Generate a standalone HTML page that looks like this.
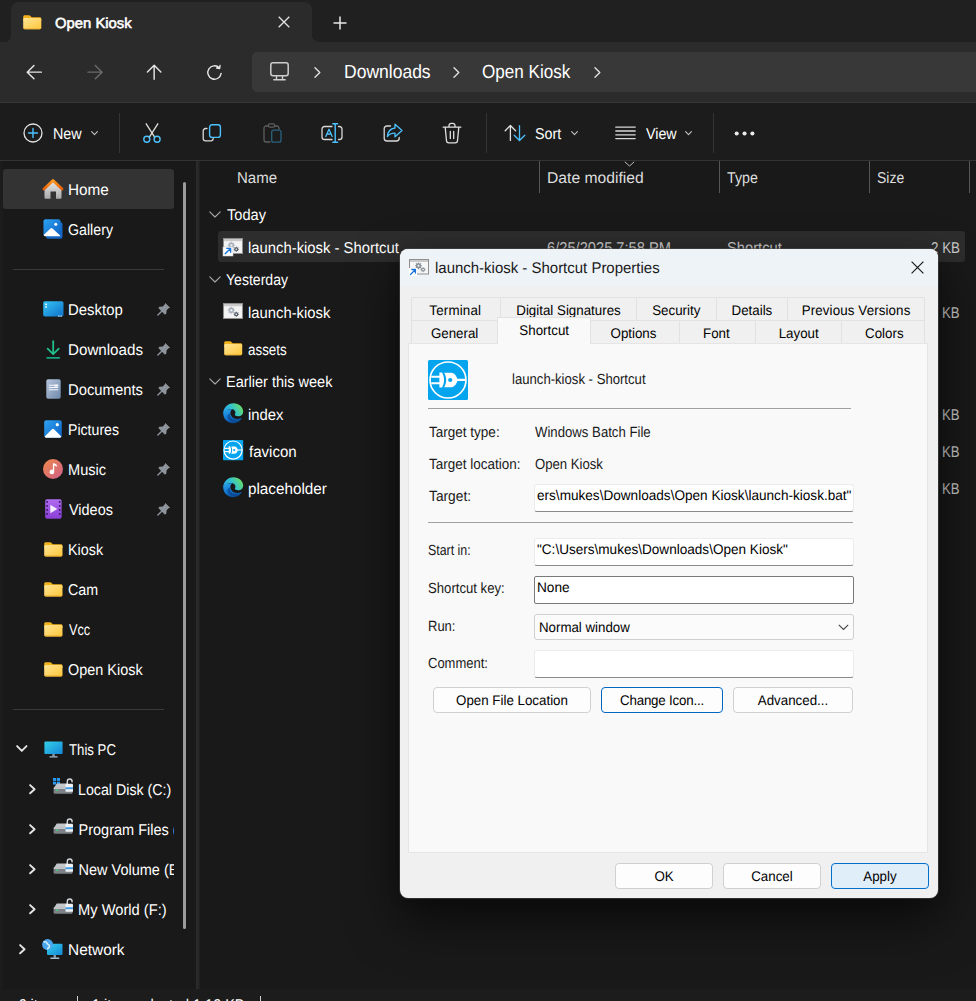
<!DOCTYPE html>
<html lang="en">
<head>
<meta charset="utf-8">
<title>Open Kiosk - File Explorer</title>
<style>
*{box-sizing:border-box;margin:0;padding:0}
html,body{width:976px;height:1001px;overflow:hidden;background:#191919}
body{position:relative;font-family:"Liberation Sans",sans-serif;color:#fff;-webkit-font-smoothing:antialiased}
.abs{position:absolute}
.t{text-rendering:geometricPrecision;position:absolute;white-space:nowrap;height:20px;line-height:20px;margin-top:-10px;font-size:14.5px;color:#fff}
svg{position:absolute;overflow:visible}
/* explorer chrome */
#titlebar{left:0;top:0;width:976px;height:42px;background:#202020}
#tab{left:11px;top:2px;width:300.700px;height:40px;background:#2b2b2b;border-radius:8px 8px 0 0}
#navbar{left:0;top:42px;width:976px;height:60px;background:#2b2b2b}
#navline{left:0;top:102px;width:976px;height:1px;background:#383838}
#addr{left:252px;top:52px;width:740px;height:40px;background:#383838;border-radius:5px}
#cmdbar{left:0;top:103px;width:976px;height:57px;background:#1c1c1c}
#cmdline{left:0;top:160px;width:976px;height:1px;background:#333}
#leftedge{left:0;top:161px;width:3px;height:828px;background:#1c1c1c}
#panesep{left:196.300px;top:161px;width:3.500px;height:828px;background:linear-gradient(to right,#2b2b2b 0,#2a2a2a 40%,#1d1d1d 100%)}
#status{left:0;top:989px;width:976px;height:12px;background:#1c1c1c}
.vsep{position:absolute;width:1px;background:#343434}
.hsep{position:absolute;height:1px;background:#3a3a3a}
/* sidebar */
.sel{position:absolute;background:#333;border-radius:3px}
.pin{left:158px}
.sy{transform:scaleY(1.08)}
.sy2{transform:scaleY(1.07);color:#1a1a1a !important}
.hd{color:#dedede}.dim{color:#cacaca}
/* dialog */
#dlg{left:400px;top:249px;width:538px;height:649px;background:#f0f0f0;border-radius:8px;overflow:hidden;box-shadow:0 0 0 1px rgba(80,80,80,.5),0 22px 50px rgba(0,0,0,.6),0 2px 14px rgba(0,0,0,.14);color:#000}
#dlg .t{color:#000;font-size:13.33px}
#dlg .lb{font-size:13.7px}
.inp .t{text-rendering:geometricPrecision}
.btn .ax{top:.300px}
.ax{display:inline-block;position:relative;top:1.200px;transform:scaleY(1.05);text-rendering:geometricPrecision}
#dlgtitle{left:0;top:0;width:538px;height:36.400px;background:#eef3f8}
.tab{position:absolute;height:23px;border:1px solid #e2e2e2;border-bottom:none;background:#f0f0f0;font-size:13.33px;text-align:center;line-height:23px;color:#000;white-space:nowrap}
#panel{left:8px;top:94px;width:520px;height:510px;background:#f9f9f9;border:1px solid #e5e5e5}
.inp{position:absolute;background:#fff;border:1px solid #ececec;border-bottom:1px solid #8a8a8a;border-radius:3px;font-size:13.33px;color:#000;white-space:nowrap;overflow:hidden}
.btn{position:absolute;background:#fdfdfd;border:1px solid #d0d0d0;border-radius:4px;font-size:13.33px;color:#000;text-align:center;white-space:nowrap}
</style>
</head>
<body>
<!-- ===== chrome ===== -->
<div class="abs" id="titlebar"></div>
<div class="abs" id="tab"></div>
<div class="abs" id="navbar"></div>
<div class="abs" id="navline"></div>
<div class="abs" id="addr"></div>
<div class="abs" id="cmdbar"></div>
<div class="abs" id="cmdline"></div>
<div class="abs" id="leftedge"></div>
<div class="abs" id="panesep"></div>
<!--CHROME-START-->
<!-- tab corner pieces -->
<div class="abs" style="left:5px;top:36px;width:6px;height:6px;background:radial-gradient(circle at 0 0,#202020 5.6px,#2b2b2b 6.4px)"></div>
<div class="abs" style="left:311.700px;top:35px;width:7px;height:7px;background:radial-gradient(circle at 100% 0,#202020 6.6px,#2b2b2b 7.4px)"></div>
<!-- tab folder icon -->
<svg style="left:23px;top:15px" width="18.5" height="14.6" viewBox="0 0 19 15"><defs><linearGradient id="fo6" x1="0" y1="0" x2="1" y2="1"><stop offset="0" stop-color="#ffe594"/><stop offset="1" stop-color="#ffc63a"/></linearGradient></defs><path d="M.2 1.800C.2 1 .9.300 1.700.300h4.600c.5 0 1 .2 1.300.6L9 2.300h8.200c.9 0 1.600.7 1.600 1.500V6H.2z" fill="#f2b21c"/><path d="M.2 4.600c0-.8.700-1.500 1.500-1.500h15.600c.8 0 1.500.7 1.500 1.500v8.600c0 .8-.7 1.500-1.500 1.500H1.700c-.8 0-1.500-.7-1.500-1.500z" fill="url(#fo6)"/><path d="M.2 12.900v.3c0 .8.700 1.500 1.500 1.500h15.600c.8 0 1.500-.7 1.500-1.500v-.3c0 .5-.7.900-1.500.900H1.700c-.8 0-1.500-.4-1.500-.9z" fill="#e8a92c"/></svg>
<span class="t sy" id="tabtitle" style="left:54.82px;top:23.7px;-webkit-text-stroke:.55px #fff;font-size:14.5px;transform:scale(1.0232,1.0);transform-origin:0 50%">Open Kiosk</span>
<svg style="left:278px;top:16px" width="12" height="12" viewBox="0 0 12 12"><path d="M.7.7l10.600 10.600M11.300.7L.7 11.300" stroke="#e4e4e4" stroke-width="1.300" fill="none"/></svg>
<svg style="left:333px;top:16px" width="14" height="14" viewBox="0 0 14 14"><path d="M7 .5v13M.5 7h13" stroke="#e8e8e8" stroke-width="1.500" fill="none"/></svg>
<!-- nav arrows -->
<svg style="left:26.100px;top:63.800px" width="16.300" height="16.300" viewBox="0 0 17 17"><path d="M16 8.500H1.500M8.300 1.500L1.300 8.500l7 7" stroke="#e6e6e6" stroke-width="1.500" fill="none" stroke-linecap="round" stroke-linejoin="round"/></svg>
<svg style="left:86.700px;top:63.800px" width="16.300" height="16.300" viewBox="0 0 17 17"><path d="M1 8.500h14.500M8.700 1.500l7 7-7 7" stroke="#6b6b6b" stroke-width="1.500" fill="none" stroke-linecap="round" stroke-linejoin="round"/></svg>
<svg style="left:145.900px;top:64.100px" width="16.300" height="16.300" viewBox="0 0 17 17"><path d="M8.500 16V1.500M1.500 8.300l7-7 7 7" stroke="#e6e6e6" stroke-width="1.500" fill="none" stroke-linecap="round" stroke-linejoin="round"/></svg>
<svg style="left:206px;top:64px" width="17" height="17" viewBox="0 0 17 17"><path d="M15.200 8.500a6.700 6.700 0 1 1-2.600-5.300M13 .8v3h-3" stroke="#e6e6e6" stroke-width="1.400" fill="none" stroke-linecap="round" stroke-linejoin="round" transform="rotate(8 8.500 8.500)"/></svg>
<!-- address bar -->
<svg style="left:270px;top:62px" width="19" height="19" viewBox="0 0 19 19"><rect x=".8" y=".8" width="17.400" height="13" rx="2.200" stroke="#cfcfcf" stroke-width="1.500" fill="none"/><path d="M6.500 14v3.600M12.500 14v3.600M3.800 17.700h11.400" stroke="#cfcfcf" stroke-width="1.400" fill="none" stroke-linecap="round"/></svg>
<svg class="chev" style="left:314px;top:67px" width="7" height="11" viewBox="0 0 7 11"><path d="M1 .8l4.800 4.700L1 10.200" stroke="#e0e0e0" stroke-width="1.400" fill="none" stroke-linecap="round" stroke-linejoin="round"/></svg>
<span class="t" id="adl" style="left:343.57px;top:70.95px;font-size:17.3px;transform:scale(1.0132,1.1);transform-origin:0 50%">Downloads</span>
<svg class="chev" style="left:453px;top:67px" width="7" height="11" viewBox="0 0 7 11"><path d="M1 .8l4.800 4.700L1 10.200" stroke="#e0e0e0" stroke-width="1.400" fill="none" stroke-linecap="round" stroke-linejoin="round"/></svg>
<span class="t" id="aok" style="left:481.72px;top:70.95px;font-size:17.3px;transform:scale(0.9884,1.1);transform-origin:0 50%">Open Kiosk</span>
<svg class="chev" style="left:594px;top:67px" width="7" height="11" viewBox="0 0 7 11"><path d="M1 .8l4.800 4.700L1 10.200" stroke="#e0e0e0" stroke-width="1.400" fill="none" stroke-linecap="round" stroke-linejoin="round"/></svg>
<!-- command bar -->
<svg style="left:22.500px;top:122.500px" width="20" height="20" viewBox="0 0 20 20"><circle cx="10" cy="10" r="9" stroke="#e4e4e4" stroke-width="1.300" fill="none"/><path d="M10 5.500v9M5.500 10h9" stroke="#4cc2ff" stroke-width="1.400" stroke-linecap="round"/></svg>
<span class="t sy" id="cnew" style="left:53.35px;top:134.55px;font-size:14.5px;transform:scale(0.9901,1.08);transform-origin:0 50%">New</span>
<svg style="left:90.5px;top:131px" width="7" height="4.500" viewBox="0 0 7 4.500"><path d="M.6.600l2.900 3 2.900-3" stroke="#c4c4c4" stroke-width="1.100" fill="none" stroke-linecap="round" stroke-linejoin="round"/></svg>
<div class="vsep" style="left:119px;top:113px;height:40px"></div>
<!-- cut -->
<svg style="left:142px;top:123px" width="20" height="20" viewBox="0 0 20 20"><path d="M4.200.800l8.600 13.600M15.800.800L7.200 14.400" stroke="#e0e0e0" stroke-width="1.300" fill="none" stroke-linecap="round"/><circle cx="4.800" cy="16.300" r="3" stroke="#4cc2ff" stroke-width="1.400" fill="none"/><circle cx="15.100" cy="16.300" r="3" stroke="#4cc2ff" stroke-width="1.400" fill="none"/></svg>
<!-- copy -->
<svg style="left:202px;top:124px" width="20" height="18" viewBox="0 0 20 18"><path d="M5 4.500H3.600A2.400 2.400 0 0 0 1.200 6.900v7.500a2.400 2.400 0 0 0 2.400 2.400h5.200a2.400 2.400 0 0 0 2.400-2.400" stroke="#d8d8d8" stroke-width="1.300" fill="none" stroke-linecap="round"/><rect x="7.600" y=".800" width="10.800" height="12.600" rx="2.400" stroke="#4cc2ff" stroke-width="1.400" fill="none"/></svg>
<!-- paste (disabled) -->
<svg style="left:263px;top:123px" width="19" height="20" viewBox="0 0 19 20"><path d="M5 3H3.200A2.200 2.200 0 0 0 1 5.200v11.600A2.200 2.200 0 0 0 3.200 19H7M12 3h1.800A2.200 2.200 0 0 1 16 5.200V6" stroke="#5e5e5e" stroke-width="1.300" fill="none" stroke-linecap="round"/><rect x="5.300" y=".800" width="6.400" height="3.400" rx="1.400" stroke="#5e5e5e" stroke-width="1.200" fill="none"/><rect x="8.700" y="7.200" width="9.300" height="12" rx="2" stroke="#2a627e" stroke-width="1.300" fill="none"/></svg>
<!-- rename -->
<svg style="left:321px;top:123px" width="22" height="20" viewBox="0 0 22 20"><path d="M11 3.500H3.600A2.600 2.600 0 0 0 1 6.100v7.800a2.600 2.600 0 0 0 2.600 2.600H11M17.500 3.500h.9A2.600 2.600 0 0 1 21 6.100v7.800a2.600 2.600 0 0 1-2.600 2.600h-.9" stroke="#d8d8d8" stroke-width="1.300" fill="none" stroke-linecap="round"/><path d="M14.200.800v18.400M11.800.800h4.800M11.800 19.200h4.800" stroke="#4cc2ff" stroke-width="1.400" fill="none" stroke-linecap="round"/><path d="M4.800 13.500L8 6.300l3.200 7.200M6 11h4" stroke="#4cc2ff" stroke-width="1.300" fill="none" stroke-linecap="round" stroke-linejoin="round"/></svg>
<!-- share -->
<svg style="left:383px;top:123px" width="20" height="20" viewBox="0 0 20 20"><path d="M7.500 3H4A2.800 2.800 0 0 0 1.200 5.800v9.400A2.800 2.800 0 0 0 4 18h9.400a2.800 2.800 0 0 0 2.800-2.800v-.700" stroke="#d8d8d8" stroke-width="1.300" fill="none" stroke-linecap="round"/><path d="M12 1.200l7 6.300-7 6.300v-3.600c-3.600-.200-5.800.900-7.600 3.400.300-4.200 2.600-8 7.600-8.600z" stroke="#4cc2ff" stroke-width="1.300" fill="none" stroke-linejoin="round"/></svg>
<!-- delete -->
<svg style="left:442px;top:122px" width="20" height="22" viewBox="0 0 20 22"><path d="M1.200 5.200h17.600M7 5V3.600A2.200 2.200 0 0 1 9.200 1.400h1.600A2.200 2.200 0 0 1 13 3.600V5M3.200 5.400l1.300 13.400a2.200 2.200 0 0 0 2.200 2h6.600a2.200 2.200 0 0 0 2.200-2L16.800 5.400" stroke="#e0e0e0" stroke-width="1.300" fill="none" stroke-linecap="round"/><path d="M8.300 9.500v7M11.700 9.500v7" stroke="#e0e0e0" stroke-width="1.300" stroke-linecap="round"/></svg>
<div class="vsep" style="left:486px;top:113px;height:40px"></div>
<!-- sort -->
<svg style="left:504px;top:123px" width="22" height="20" viewBox="0 0 22 20"><path d="M6.400 17.400V2.600M1.200 7.800l5.200-5.300 5.200 5.300" stroke="#e0e0e0" stroke-width="1.300" fill="none" stroke-linecap="round" stroke-linejoin="round"/><path d="M15.500 2.600v14.800M10.200 12.200l5.300 5.300 5.300-5.300" stroke="#4cc2ff" stroke-width="1.300" fill="none" stroke-linecap="round" stroke-linejoin="round"/></svg>
<span class="t sy" id="csort" style="left:535.33px;top:134.55px;font-size:14.5px;transform:scale(0.9894,1.08);transform-origin:0 50%">Sort</span>
<svg style="left:570.6px;top:131px" width="7" height="4.500" viewBox="0 0 7 4.500"><path d="M.6.600l2.900 3 2.900-3" stroke="#c4c4c4" stroke-width="1.100" fill="none" stroke-linecap="round" stroke-linejoin="round"/></svg>
<!-- view -->
<svg style="left:614.700px;top:126.200px" width="21" height="14" viewBox="0 0 21 14"><path d="M.8 1.200h19.400M.8 5h19.400M.8 8.800h19.400M.8 12.600h19.400" stroke="#d8d8d8" stroke-width="1.300" stroke-linecap="round"/></svg>
<span class="t sy" id="cview" style="left:645.83px;top:134.55px;font-size:14.5px;transform:scale(0.9831,1.08);transform-origin:0 50%">View</span>
<svg style="left:684.5px;top:131px" width="7" height="4.500" viewBox="0 0 7 4.500"><path d="M.6.600l2.900 3 2.900-3" stroke="#c4c4c4" stroke-width="1.100" fill="none" stroke-linecap="round" stroke-linejoin="round"/></svg>
<div class="vsep" style="left:713px;top:113px;height:40px"></div>
<svg style="left:734px;top:130.500px" width="21" height="5" viewBox="0 0 21 5"><circle cx="2.700" cy="2.500" r="2.050" fill="#ececec"/><circle cx="10.550" cy="2.500" r="2.050" fill="#ececec"/><circle cx="18.400" cy="2.500" r="2.050" fill="#ececec"/></svg>
<!--CHROME-END-->
<!--SIDE-START-->
<div class="sel" style="left:3px;top:169px;width:171px;height:40px"></div>
<div class="hsep" style="left:13px;top:269px;width:151px"></div>
<div class="hsep" style="left:13px;top:709px;width:151px"></div>
<div class="abs" id="sideclip" style="left:0;top:161px;width:174px;height:828px;overflow:hidden">
<svg style="left:43px;top:18px" width="20" height="20" viewBox="0 0 20 20"><defs><linearGradient id="hg0" x1="0" y1="0" x2="0" y2="1"><stop offset="0" stop-color="#e6e6e6"/><stop offset="1" stop-color="#a9a9a9"/></linearGradient><linearGradient id="hr0" x1="0" y1="0" x2="0" y2="1"><stop offset="0" stop-color="#ff9a1f"/><stop offset="1" stop-color="#e85d04"/></linearGradient></defs><path d="M1.500 9.500L10 2.500l8.500 7v9.300a1 1 0 0 1-1 1h-4.500v-7.300H7.500v7.300H2.500a1 1 0 0 1-1-1z" fill="url(#hg0)"/><path d="M.9 10.100L10 1.500l9.100 8.600" stroke="url(#hr0)" stroke-width="2.700" fill="none" stroke-linecap="round" stroke-linejoin="round"/></svg>
<span class="t sy" id="s0" style="left:67.87px;top:29.55px;font-size:14.5px;transform:scale(1.0568,1.08);transform-origin:0 50%">Home</span>
<svg style="left:43px;top:58px" width="20" height="20" viewBox="0 0 20 20"><defs><linearGradient id="gg1" x1="0" y1="0" x2="1" y2="1"><stop offset="0" stop-color="#2ea3f2"/><stop offset="1" stop-color="#0d5fc2"/></linearGradient></defs><rect x="3" y="3.200" width="16.500" height="16.500" rx="2" fill="#1467c4"/><rect x=".5" y=".3" width="17" height="17" rx="2" fill="url(#gg1)"/><path d="M.6 16l6.900-6.500a1.500 1.500 0 0 1 2 0l7.900 7.300a1.800 1.800 0 0 1-1.500.5H2.500A2 2 0 0 1 .6 16z" fill="#fff"/><circle cx="12.800" cy="5.200" r="1.500" fill="#fff"/></svg>
<span class="t sy" id="s1" style="left:68.32px;top:69.55px;font-size:14.5px;transform:scale(0.9795,1.08);transform-origin:0 50%">Gallery</span>
<svg style="left:43px;top:139px" width="21" height="18" viewBox="0 0 21 18"><defs><linearGradient id="dg2" x1="0" y1="0" x2="1" y2="1"><stop offset="0" stop-color="#36c5f5"/><stop offset="1" stop-color="#0f6fc9"/></linearGradient></defs><rect x=".2" y="1.300" width="20.300" height="15.200" rx="1.800" fill="url(#dg2)"/><rect x="2.200" y="3.600" width="1.800" height="1.500" fill="#e9fbff"/><rect x="2.200" y="6.200" width="1.800" height="1.500" fill="#e9fbff"/><rect x="15.300" y="15.500" width="1.300" height="1.200" fill="#dff"/><rect x="17.500" y="15.500" width="1.300" height="1.200" fill="#dff"/></svg>
<span class="t sy" id="s2" style="left:67.90px;top:149.55px;font-size:14.5px;transform:scale(1.0291,1.08);transform-origin:0 50%">Desktop</span>
<svg style="left:157px;top:141px" width="14" height="14" viewBox="0 0 14 14"><path d="M8.300.9l4.800 4.800-1.500.6-2 2-.3 3.200-1.300 1.200L1.300 6l1.200-1.300 3.200-.3 2-2z" fill="#8d949b"/><path d="M4.500 9.500L.9 13.100" stroke="#8d949b" stroke-width="1.400" stroke-linecap="round"/></svg>
<svg style="left:45.800px;top:178.5px" width="14.400" height="19.200" viewBox="0 0 16 21"><path d="M8 1v14.300M1.800 9.400L8 15.600l6.200-6.200" stroke="#21c08a" stroke-width="2" fill="none" stroke-linecap="round" stroke-linejoin="round"/><path d="M1.200 19.600h13.600" stroke="#16a37f" stroke-width="1.900" stroke-linecap="round"/></svg>
<span class="t sy" id="s3" style="left:67.88px;top:189.55px;font-size:14.5px;transform:scale(1.0453,1.08);transform-origin:0 50%">Downloads</span>
<svg style="left:157px;top:181px" width="14" height="14" viewBox="0 0 14 14"><path d="M8.300.9l4.800 4.800-1.500.6-2 2-.3 3.200-1.300 1.200L1.300 6l1.200-1.300 3.200-.3 2-2z" fill="#8d949b"/><path d="M4.500 9.500L.9 13.100" stroke="#8d949b" stroke-width="1.400" stroke-linecap="round"/></svg>
<svg style="left:45.500px;top:218px" width="15" height="20" viewBox="0 0 15 20"><defs><linearGradient id="docg4" x1="0" y1="0" x2="1" y2="1"><stop offset="0" stop-color="#b7c6dc"/><stop offset="1" stop-color="#6f89ad"/></linearGradient></defs><rect x=".3" y=".3" width="14.400" height="19.400" rx="1.800" fill="url(#docg4)"/><path d="M2.800 6.300h9.400M2.800 8.500h9.400M2.800 10.700h9.400" stroke="#f4f7fb" stroke-width="1.100"/><rect x="8.300" y="5.600" width="3.900" height="2" fill="#f4f7fb"/></svg>
<span class="t sy" id="s4" style="left:67.91px;top:229.55px;font-size:14.5px;transform:scale(1.0216,1.08);transform-origin:0 50%">Documents</span>
<svg style="left:157px;top:221px" width="14" height="14" viewBox="0 0 14 14"><path d="M8.300.9l4.800 4.800-1.500.6-2 2-.3 3.200-1.300 1.200L1.300 6l1.200-1.300 3.200-.3 2-2z" fill="#8d949b"/><path d="M4.500 9.500L.9 13.100" stroke="#8d949b" stroke-width="1.400" stroke-linecap="round"/></svg>
<svg style="left:44px;top:259px" width="18" height="18" viewBox="0 0 18 18"><defs><linearGradient id="pg5" x1="0" y1="0" x2="1" y2="1"><stop offset="0" stop-color="#2ea3f2"/><stop offset="1" stop-color="#0d5fc2"/></linearGradient></defs><rect x=".2" y=".2" width="17.600" height="17.600" rx="2" fill="url(#pg5)"/><path d="M.7 16.400l7-6.900a1.800 1.800 0 0 1 2.600 0l7 6.900a2 2 0 0 1-1.500 1.400H2.200A2 2 0 0 1 .7 16.400z" fill="#fff"/><circle cx="13.300" cy="4.700" r="1.600" fill="#fff"/></svg>
<span class="t sy" id="s5" style="left:67.96px;top:269.55px;font-size:14.5px;transform:scale(0.9734,1.08);transform-origin:0 50%">Pictures</span>
<svg style="left:157px;top:261px" width="14" height="14" viewBox="0 0 14 14"><path d="M8.300.9l4.800 4.800-1.500.6-2 2-.3 3.200-1.300 1.200L1.300 6l1.200-1.300 3.200-.3 2-2z" fill="#8d949b"/><path d="M4.500 9.500L.9 13.100" stroke="#8d949b" stroke-width="1.400" stroke-linecap="round"/></svg>
<svg style="left:43px;top:298px" width="20" height="20" viewBox="0 0 20 20"><defs><linearGradient id="mg6" x1="0" y1="0" x2="1" y2="1"><stop offset="0" stop-color="#f0894a"/><stop offset="1" stop-color="#cf5f8a"/></linearGradient></defs><circle cx="10" cy="10" r="10" fill="url(#mg6)"/><path d="M10.600 4.200c1.200.200 3 .900 3.600 2.600l-.8.900c-.7-.800-1.500-1.100-2.200-1.200v6.500a2.300 2.300 0 1 1-1.300-2.100V4.200z" fill="#fff"/></svg>
<span class="t sy" id="s6" style="left:67.93px;top:309.55px;font-size:14.5px;transform:scale(1.0062,1.08);transform-origin:0 50%">Music</span>
<svg style="left:157px;top:301px" width="14" height="14" viewBox="0 0 14 14"><path d="M8.300.9l4.800 4.800-1.500.6-2 2-.3 3.200-1.300 1.200L1.300 6l1.200-1.300 3.200-.3 2-2z" fill="#8d949b"/><path d="M4.500 9.500L.9 13.100" stroke="#8d949b" stroke-width="1.400" stroke-linecap="round"/></svg>
<svg style="left:45px;top:338px" width="17" height="20" viewBox="0 0 17 20"><defs><linearGradient id="vg7" x1="0" y1="0" x2="0" y2="1"><stop offset="0" stop-color="#b06cf0"/><stop offset="1" stop-color="#8a3ed6"/></linearGradient></defs><rect x=".2" y=".2" width="16.400" height="19.600" rx="1.800" fill="url(#vg7)"/><g fill="#3b1b6b"><rect x="1.300" y="2" width="1.600" height="1.800"/><rect x="1.300" y="6" width="1.600" height="1.800"/><rect x="1.300" y="10" width="1.600" height="1.800"/><rect x="1.300" y="14" width="1.600" height="1.800"/><rect x="13.900" y="2" width="1.600" height="1.800"/><rect x="13.900" y="6" width="1.600" height="1.800"/><rect x="13.900" y="10" width="1.600" height="1.800"/><rect x="13.900" y="14" width="1.600" height="1.800"/></g><path d="M5.300 5.800l7 4.200-7 4.200z" fill="#f4eaff"/></svg>
<span class="t sy" id="s7" style="left:68.93px;top:349.55px;font-size:14.5px;transform:scale(0.996,1.08);transform-origin:0 50%">Videos</span>
<svg style="left:157px;top:341px" width="14" height="14" viewBox="0 0 14 14"><path d="M8.300.9l4.800 4.800-1.500.6-2 2-.3 3.200-1.300 1.200L1.300 6l1.200-1.300 3.200-.3 2-2z" fill="#8d949b"/><path d="M4.500 9.500L.9 13.100" stroke="#8d949b" stroke-width="1.400" stroke-linecap="round"/></svg>
<svg style="left:43.7px;top:380.6px" width="18.7" height="14.8" viewBox="0 0 19 15"><defs><linearGradient id="fo1" x1="0" y1="0" x2="1" y2="1"><stop offset="0" stop-color="#ffe594"/><stop offset="1" stop-color="#ffc63a"/></linearGradient></defs><path d="M.2 1.800C.2 1 .9.300 1.700.300h4.600c.5 0 1 .2 1.300.6L9 2.300h8.200c.9 0 1.600.7 1.600 1.500V6H.2z" fill="#f2b21c"/><path d="M.2 4.600c0-.8.700-1.500 1.500-1.500h15.600c.8 0 1.500.7 1.500 1.500v8.600c0 .8-.7 1.500-1.500 1.500H1.700c-.8 0-1.500-.7-1.500-1.500z" fill="url(#fo1)"/><path d="M.2 12.900v.3c0 .8.700 1.500 1.500 1.500h15.600c.8 0 1.500-.7 1.500-1.500v-.3c0 .5-.7.900-1.500.900H1.700c-.8 0-1.500-.4-1.500-.9z" fill="#e8a92c"/></svg>
<span class="t sy" id="s8" style="left:67.94px;top:389.55px;font-size:14.5px;transform:scale(0.9891,1.08);transform-origin:0 50%">Kiosk</span>
<svg style="left:43.7px;top:420.6px" width="18.7" height="14.8" viewBox="0 0 19 15"><defs><linearGradient id="fo2" x1="0" y1="0" x2="1" y2="1"><stop offset="0" stop-color="#ffe594"/><stop offset="1" stop-color="#ffc63a"/></linearGradient></defs><path d="M.2 1.800C.2 1 .9.300 1.700.300h4.600c.5 0 1 .2 1.300.6L9 2.300h8.200c.9 0 1.600.7 1.600 1.500V6H.2z" fill="#f2b21c"/><path d="M.2 4.600c0-.8.700-1.500 1.500-1.500h15.600c.8 0 1.500.7 1.500 1.500v8.600c0 .8-.7 1.500-1.500 1.500H1.700c-.8 0-1.500-.7-1.500-1.500z" fill="url(#fo2)"/><path d="M.2 12.900v.3c0 .8.700 1.500 1.500 1.500h15.600c.8 0 1.500-.7 1.500-1.500v-.3c0 .5-.7.900-1.500.900H1.700c-.8 0-1.500-.4-1.500-.9z" fill="#e8a92c"/></svg>
<span class="t sy" id="s9" style="left:68.02px;top:429.55px;font-size:14.5px;transform:scale(0.9835,1.08);transform-origin:0 50%">Cam</span>
<svg style="left:43.7px;top:460.6px" width="18.7" height="14.8" viewBox="0 0 19 15"><defs><linearGradient id="fo3" x1="0" y1="0" x2="1" y2="1"><stop offset="0" stop-color="#ffe594"/><stop offset="1" stop-color="#ffc63a"/></linearGradient></defs><path d="M.2 1.800C.2 1 .9.300 1.700.300h4.600c.5 0 1 .2 1.300.6L9 2.300h8.200c.9 0 1.600.7 1.600 1.500V6H.2z" fill="#f2b21c"/><path d="M.2 4.600c0-.8.700-1.500 1.500-1.500h15.600c.8 0 1.500.7 1.500 1.500v8.600c0 .8-.7 1.500-1.500 1.500H1.700c-.8 0-1.500-.7-1.500-1.500z" fill="url(#fo3)"/><path d="M.2 12.900v.3c0 .8.700 1.500 1.500 1.500h15.600c.8 0 1.500-.7 1.500-1.500v-.3c0 .5-.7.900-1.500.900H1.700c-.8 0-1.500-.4-1.500-.9z" fill="#e8a92c"/></svg>
<span class="t sy" id="s10" style="left:68.66px;top:469.55px;font-size:14.5px;transform:scale(0.8762,1.08);transform-origin:0 50%">Vcc</span>
<svg style="left:43.7px;top:500.6px" width="18.7" height="14.8" viewBox="0 0 19 15"><defs><linearGradient id="fo4" x1="0" y1="0" x2="1" y2="1"><stop offset="0" stop-color="#ffe594"/><stop offset="1" stop-color="#ffc63a"/></linearGradient></defs><path d="M.2 1.800C.2 1 .9.300 1.700.300h4.600c.5 0 1 .2 1.300.6L9 2.300h8.200c.9 0 1.600.7 1.600 1.500V6H.2z" fill="#f2b21c"/><path d="M.2 4.600c0-.8.700-1.500 1.500-1.500h15.600c.8 0 1.500.7 1.500 1.500v8.600c0 .8-.7 1.500-1.500 1.500H1.700c-.8 0-1.500-.7-1.500-1.500z" fill="url(#fo4)"/><path d="M.2 12.900v.3c0 .8.700 1.500 1.500 1.500h15.600c.8 0 1.500-.7 1.500-1.500v-.3c0 .5-.7.900-1.500.900H1.700c-.8 0-1.500-.4-1.500-.9z" fill="#e8a92c"/></svg>
<span class="t sy" id="s11" style="left:68.14px;top:509.55px;font-size:14.5px;transform:scale(0.9963,1.08);transform-origin:0 50%">Open Kiosk</span>
<svg style="left:44px;top:579.5px" width="19" height="17" viewBox="0 0 19 17"><defs><linearGradient id="tg12" x1="0" y1="0" x2="1" y2="1"><stop offset="0" stop-color="#35d0e8"/><stop offset="1" stop-color="#1488d8"/></linearGradient></defs><rect x=".4" y=".4" width="18.200" height="12.700" rx="1" fill="url(#tg12)"/><rect x="8.300" y="13.100" width="2.400" height="2.300" fill="#8aa0b2"/><rect x="5.400" y="15.200" width="8.200" height="1.300" rx=".5" fill="#a8bccb"/></svg>
<span class="t sy" id="s12" style="left:68.53px;top:589.55px;font-size:14.5px;transform:scale(0.9103,1.08);transform-origin:0 50%">This PC</span>
<svg style="left:15.9px;top:584.3px" width="11.600" height="7.400" viewBox="0 0 11.600 7.400"><path d="M1.100 1.100l4.700 4.800 4.700-4.800" stroke="#e4e4e4" stroke-width="1.900" fill="none" stroke-linecap="round" stroke-linejoin="round"/></svg>
<svg style="left:53px;top:617.3px" width="21" height="17" viewBox="0 0 21 17"><g fill="#2b9af3"><rect x="0" y="0" width="3.100" height="2.900"/><rect x="3.900" y="0" width="3.100" height="2.900"/><rect x="0" y="3.700" width="3.100" height="2.900"/><rect x="3.900" y="3.700" width="3.100" height="2.900"/></g><path d="M.8 10L3.800 5.600h10.400l3 4.400z" fill="#c3c7cb"/><rect x=".6" y="9.400" width="19" height="6.400" rx="1.300" fill="#7d8288"/><rect x=".6" y="9.400" width="19" height="1.300" rx=".6" fill="#d9dcdf"/><rect x="3.200" y="11.500" width="1.700" height="1.500" fill="#3fe06a"/><path d="M14.300 6.500V3.400a2.400 2.400 0 0 1 4.800 0v.8" stroke="#d4d7da" stroke-width="1.400" fill="none"/><rect x="12.500" y="5.800" width="7.500" height="8" rx=".9" fill="#eef0f2"/><rect x="12.500" y="9.300" width="7.500" height="1.900" fill="#3d9be9"/></svg>
<span class="t sy" id="s13" style="left:77.75px;top:629.55px;font-size:14.5px;transform:scale(0.9815,1.08);transform-origin:0 50%">Local Disk (C:)</span>
<svg style="left:29.1px;top:622.8px" width="7" height="10.400" viewBox="0 0 7 10.400"><path d="M1.100 1.100l4.500 4.100-4.500 4.100" stroke="#e4e4e4" stroke-width="1.900" fill="none" stroke-linecap="round" stroke-linejoin="round"/></svg>
<svg style="left:53px;top:657.3px" width="21" height="17" viewBox="0 0 21 17"><path d="M.8 10L3.800 5.600h10.400l3 4.400z" fill="#c3c7cb"/><rect x=".6" y="9.400" width="19" height="6.400" rx="1.300" fill="#7d8288"/><rect x=".6" y="9.400" width="19" height="1.300" rx=".6" fill="#d9dcdf"/><rect x="3.200" y="11.500" width="1.700" height="1.500" fill="#3fe06a"/><path d="M14.300 6.500V3.400a2.400 2.400 0 0 1 4.800 0v.8" stroke="#d4d7da" stroke-width="1.400" fill="none"/><rect x="12.500" y="5.800" width="7.500" height="8" rx=".9" fill="#eef0f2"/><rect x="12.500" y="9.300" width="7.500" height="1.900" fill="#3d9be9"/></svg>
<span class="t sy" id="s14" style="left:78.5px;top:669.55px;font-size:14.500px">Program Files (D:)</span>
<svg style="left:29.1px;top:662.8px" width="7" height="10.400" viewBox="0 0 7 10.400"><path d="M1.100 1.100l4.500 4.100-4.500 4.100" stroke="#e4e4e4" stroke-width="1.900" fill="none" stroke-linecap="round" stroke-linejoin="round"/></svg>
<svg style="left:53px;top:697.3px" width="21" height="17" viewBox="0 0 21 17"><path d="M.8 10L3.800 5.600h10.400l3 4.400z" fill="#c3c7cb"/><rect x=".6" y="9.400" width="19" height="6.400" rx="1.300" fill="#7d8288"/><rect x=".6" y="9.400" width="19" height="1.300" rx=".6" fill="#d9dcdf"/><rect x="3.200" y="11.500" width="1.700" height="1.500" fill="#3fe06a"/><path d="M14.300 6.500V3.400a2.400 2.400 0 0 1 4.800 0v.8" stroke="#d4d7da" stroke-width="1.400" fill="none"/><rect x="12.500" y="5.800" width="7.500" height="8" rx=".9" fill="#eef0f2"/><rect x="12.500" y="9.300" width="7.500" height="1.900" fill="#3d9be9"/></svg>
<span class="t sy" id="s15" style="left:78.5px;top:709.55px;font-size:14.500px">New Volume (E:)</span>
<svg style="left:29.1px;top:702.8px" width="7" height="10.400" viewBox="0 0 7 10.400"><path d="M1.100 1.100l4.500 4.100-4.500 4.100" stroke="#e4e4e4" stroke-width="1.900" fill="none" stroke-linecap="round" stroke-linejoin="round"/></svg>
<svg style="left:53px;top:737.3px" width="21" height="17" viewBox="0 0 21 17"><path d="M.8 10L3.800 5.600h10.400l3 4.400z" fill="#c3c7cb"/><rect x=".6" y="9.400" width="19" height="6.400" rx="1.300" fill="#7d8288"/><rect x=".6" y="9.400" width="19" height="1.300" rx=".6" fill="#d9dcdf"/><rect x="3.200" y="11.500" width="1.700" height="1.500" fill="#3fe06a"/><path d="M14.300 6.500V3.400a2.400 2.400 0 0 1 4.800 0v.8" stroke="#d4d7da" stroke-width="1.400" fill="none"/><rect x="12.500" y="5.800" width="7.500" height="8" rx=".9" fill="#eef0f2"/><rect x="12.500" y="9.300" width="7.500" height="1.900" fill="#3d9be9"/></svg>
<span class="t sy" id="s16" style="left:77.72px;top:749.55px;font-size:14.5px;transform:scale(1.0129,1.08);transform-origin:0 50%">My World (F:)</span>
<svg style="left:29.1px;top:742.8px" width="7" height="10.400" viewBox="0 0 7 10.400"><path d="M1.100 1.100l4.500 4.100-4.500 4.100" stroke="#e4e4e4" stroke-width="1.900" fill="none" stroke-linecap="round" stroke-linejoin="round"/></svg>
<svg style="left:42px;top:777.5px" width="21" height="21" viewBox="0 0 21 21"><defs><linearGradient id="ng17" x1="0" y1="0" x2="1" y2="1"><stop offset="0" stop-color="#35d0e8"/><stop offset="1" stop-color="#1488d8"/></linearGradient></defs><rect x="5" y="4.800" width="15.500" height="11.300" rx="1" fill="url(#ng17)"/><rect x="11.600" y="16" width="2.300" height="2.800" fill="#8aa0b2"/><rect x="8.300" y="18.600" width="9" height="1.400" rx=".5" fill="#a8bccb"/><circle cx="5.600" cy="5.600" r="5.500" fill="#4aa6ee"/><path d="M1.500 3.200c1.600-1 3.200-.3 3.400 1s2 .9 2.500 2.300-.9 2.800-2.400 3.200" stroke="#d9f3ff" stroke-width="1.500" fill="none"/></svg>
<span class="t sy" id="s17" style="left:67.57px;top:789.55px;font-size:14.5px;transform:scale(1.0635,1.08);transform-origin:0 50%">Network</span>
<svg style="left:19.1px;top:782.8px" width="7" height="10.400" viewBox="0 0 7 10.400"><path d="M1.100 1.100l4.500 4.100-4.500 4.100" stroke="#e4e4e4" stroke-width="1.900" fill="none" stroke-linecap="round" stroke-linejoin="round"/></svg>
</div>
<div class="abs" id="sbthumb" style="left:183px;top:182px;width:3px;height:747.200px;background:#9b9b9b;border-radius:2px"></div>
<!--SIDE-END-->
<!--LIST-START-->
<span class="t hd sy" id="hname" style="left:236.59px;top:179.35px;font-size:14.5px;transform:scale(1.0351,1.08);transform-origin:0 50%">Name</span>
<span class="t hd sy" id="hdate" style="left:546.95px;top:179.35px;font-size:14.5px;transform:scale(1.0804,1.08);transform-origin:0 50%">Date modified</span>
<span class="t hd sy" id="htype" style="left:727.22px;top:179.35px;font-size:14.5px;transform:scale(0.9829,1.08);transform-origin:0 50%">Type</span>
<span class="t hd sy" id="hsize" style="left:876.85px;top:179.35px;font-size:14.5px;transform:scale(0.9667,1.08);transform-origin:0 50%">Size</span>
<div class="vsep" style="left:539px;top:161px;height:32px;background:#565656"></div>
<div class="vsep" style="left:719px;top:161px;height:32px;background:#565656"></div>
<div class="vsep" style="left:869px;top:161px;height:32px;background:#565656"></div>
<div class="vsep" style="left:969px;top:161px;height:32px;background:#565656"></div>
<svg style="left:624px;top:161px" width="11" height="6" viewBox="0 0 11 6"><path d="M.8.800l4.700 4.200L10.200.800" stroke="#bdbdbd" stroke-width="1" fill="none"/></svg>
<div class="sel" id="rowsel" style="left:218px;top:231px;width:747px;height:31px;background:#2d2d2d;border-radius:3px"></div>
<svg style="left:209px;top:211px" width="12" height="7" viewBox="0 0 12 7"><path d="M.8.800L6 6l5.200-5.200" stroke="#a8a8a8" stroke-width="1.100" fill="none" stroke-linecap="round" stroke-linejoin="round"/></svg>
<span class="t sy" id="g0" style="left:226.60px;top:215.75px;font-size:14.5px;transform:scale(1.0059,1.08);transform-origin:0 50%">Today</span>
<svg style="left:209px;top:276px" width="12" height="7" viewBox="0 0 12 7"><path d="M.8.800L6 6l5.200-5.200" stroke="#a8a8a8" stroke-width="1.100" fill="none" stroke-linecap="round" stroke-linejoin="round"/></svg>
<span class="t sy" id="g1" style="left:226.49px;top:280.75px;font-size:14.5px;transform:scale(0.9701,1.08);transform-origin:0 50%">Yesterday</span>
<svg style="left:209px;top:378px" width="12" height="7" viewBox="0 0 12 7"><path d="M.8.800L6 6l5.200-5.200" stroke="#a8a8a8" stroke-width="1.100" fill="none" stroke-linecap="round" stroke-linejoin="round"/></svg>
<span class="t sy" id="g2" style="left:225.93px;top:382.75px;font-size:14.5px;transform:scale(1.0005,1.08);transform-origin:0 50%">Earlier this week</span>
<svg style="left:223px;top:238px" width="20" height="18" viewBox="0 0 20 18"><rect x=".5" y=".5" width="19" height="15" fill="#f3f3f3" stroke="#8f8f8f" stroke-width="1"/><rect x="1" y="1" width="18" height="2.200" fill="#c9c9c9"/><g><circle cx="8.300" cy="7.300" r="2.700" fill="#aab3be"/><circle cx="13.300" cy="11.300" r="2" fill="#56606a"/></g><g fill="#f3f3f3"><circle cx="8.300" cy="7.300" r="1.100"/><circle cx="13.300" cy="11.300" r=".8"/></g><g stroke-width="1.100"><path d="M8.300 3.800v7M4.800 7.300h7M5.800 4.800l5 5M10.800 4.800l-5 5" stroke="#aab3be"/><path d="M13.300 8.700v5.200M10.700 11.300h5.200M11.500 9.500l3.600 3.600M15.100 9.500l-3.600 3.600" stroke-width=".9" stroke="#56606a"/></g><g fill="#f3f3f3"><circle cx="8.300" cy="7.300" r="1.100"/><circle cx="13.300" cy="11.300" r=".8"/></g><rect x="0" y="9" width="10" height="9" fill="#fff" stroke="#c8c8c8" stroke-width=".6"/><path d="M2.200 15.800l5.300-5.300M3.800 10.400h3.800v3.800" stroke="#1a73d9" stroke-width="1.400" fill="none" stroke-linecap="round" stroke-linejoin="round"/></svg>
<span class="t sy" id="r0" style="left:247.73px;top:248.75px;font-size:14.5px;transform:scale(1.0227,1.08);transform-origin:0 50%">launch-kiosk - Shortcut</span>
<span class="t dim sy" id="d0" style="left:547.20px;top:248.75px;font-size:14.5px;transform:scale(1.0122,1.08);transform-origin:0 50%">6/25/2025 7:58 PM</span>
<span class="t dim sy" id="y0" style="left:726.82px;top:248.75px;font-size:14.5px;transform:scale(1.016,1.08);transform-origin:0 50%">Shortcut</span>
<span class="t dim sy" id="z0" style="left:930.57px;top:248.75px;font-size:14.5px;transform:scale(0.9238,1.08);transform-origin:0 50%">2 KB</span>
<svg style="left:223px;top:302.700px" width="20" height="18" viewBox="0 0 20 18"><rect x=".5" y=".5" width="19" height="15" fill="#f3f3f3" stroke="#8f8f8f" stroke-width="1"/><rect x="1" y="1" width="18" height="2.200" fill="#c9c9c9"/><g><circle cx="8.300" cy="7.300" r="2.700" fill="#aab3be"/><circle cx="13.300" cy="11.300" r="2" fill="#56606a"/></g><g fill="#f3f3f3"><circle cx="8.300" cy="7.300" r="1.100"/><circle cx="13.300" cy="11.300" r=".8"/></g><g stroke-width="1.100"><path d="M8.300 3.800v7M4.800 7.300h7M5.800 4.800l5 5M10.800 4.800l-5 5" stroke="#aab3be"/><path d="M13.300 8.700v5.200M10.700 11.300h5.200M11.500 9.500l3.600 3.600M15.100 9.500l-3.600 3.600" stroke-width=".9" stroke="#56606a"/></g><g fill="#f3f3f3"><circle cx="8.300" cy="7.300" r="1.100"/><circle cx="13.300" cy="11.300" r=".8"/></g></svg>
<span class="t sy" id="r1" style="left:247.74px;top:313.75px;font-size:14.5px;transform:scale(1.0223,1.08);transform-origin:0 50%">launch-kiosk</span>
<span class="t dim sy" id="d1" style="left:547.500px;top:313.75px">6/24/2025 9:12 PM</span>
<span class="t dim sy" id="y1" style="left:727px;top:313.75px">Windows Batch File</span>
<span class="t dim sy" id="z1" style="right:16.500px;top:313.75px;font-size:14.5px;transform:scale(0.9066,1.08);transform-origin:100% 50%">1 KB</span>
<svg style="left:223.8px;top:340.8px" width="18.4" height="14.6" viewBox="0 0 19 15"><defs><linearGradient id="fo5" x1="0" y1="0" x2="1" y2="1"><stop offset="0" stop-color="#ffe594"/><stop offset="1" stop-color="#ffc63a"/></linearGradient></defs><path d="M.2 1.800C.2 1 .9.300 1.700.300h4.600c.5 0 1 .2 1.300.6L9 2.300h8.200c.9 0 1.600.7 1.600 1.500V6H.2z" fill="#f2b21c"/><path d="M.2 4.600c0-.8.700-1.500 1.500-1.500h15.600c.8 0 1.500.7 1.500 1.500v8.600c0 .8-.7 1.500-1.500 1.500H1.700c-.8 0-1.500-.7-1.500-1.500z" fill="url(#fo5)"/><path d="M.2 12.900v.3c0 .8.700 1.500 1.500 1.500h15.600c.8 0 1.500-.7 1.500-1.500v-.3c0 .5-.7.900-1.500.900H1.700c-.8 0-1.500-.4-1.500-.9z" fill="#e8a92c"/></svg>
<span class="t sy" id="r2" style="left:248.19px;top:350.75px;font-size:14.5px;transform:scale(0.9227,1.08);transform-origin:0 50%">assets</span>
<span class="t dim sy" id="d2" style="left:547.500px;top:350.75px">6/24/2025 8:47 PM</span>
<span class="t dim sy" id="y2" style="left:727px;top:350.75px">File folder</span>
<svg style="left:222.800px;top:402.7px" width="20.400" height="20.400" viewBox="0 0 20 20"><defs><linearGradient id="eg3" x1="0" y1="0" x2=".3" y2="1"><stop offset="0" stop-color="#2aa6ea"/><stop offset=".6" stop-color="#1579d3"/><stop offset="1" stop-color="#0c4f9e"/></linearGradient><linearGradient id="eh3" x1="0" y1=".6" x2="1" y2=".2"><stop offset="0" stop-color="#2b9fe8"/><stop offset=".45" stop-color="#30c3cf"/><stop offset="1" stop-color="#73e056"/></linearGradient></defs><path d="M.2 10C.2 15.600 4.600 19.800 10 19.800c3.500 0 6.500-1.800 8.200-4.600.2-.4-.2-.7-.6-.5-1.100.6-2.300.9-3.600.9-3.800 0-6.800-2.600-6.800-5.800 0-1.600.8-2.900 1.800-3.600C4.500 6 .2 7.500.2 10z" fill="url(#eg3)"/><path d="M4.300 13.200c.6 3.300 3.600 5.700 7.200 5.700 2.500 0 4.600-1 6.100-2.600-1.100.5-2.300.7-3.600.7-4.400 0-7.600-2.800-7.300-6.800-1.300.5-2.400 1.600-2.400 3z" fill="#0a4a95" opacity=".8"/><path d="M.2 10.500C.2 4.500 4.600.2 10.200.2c5.600 0 9.600 4 9.600 8.100 0 3-2.400 4.800-4.800 4.800-2.200 0-3.400-.8-3.400-1.700 0-.5.600-.9.600-2 0-1.800-1.800-3.500-4.400-3.500C4 5.900.2 8.600.2 10.500z" fill="url(#eh3)"/></svg>
<span class="t sy" id="r3" style="left:247.83px;top:415.75px;font-size:14.5px;transform:scale(1.0239,1.08);transform-origin:0 50%">index</span>
<span class="t dim sy" id="d3" style="left:547.500px;top:415.75px">6/23/2025 6:31 PM</span>
<span class="t dim sy" id="y3" style="left:727px;top:415.75px">Microsoft Edge HTML Document</span>
<span class="t dim sy" id="z3" style="right:16.500px;top:415.75px;font-size:14.5px;transform:scale(0.9066,1.08);transform-origin:100% 50%">4 KB</span>
<svg style="left:222.8px;top:439.8px" width="20.2" height="20.2" viewBox="0 0 40 40"><rect width="40" height="40" rx="1.500" fill="#05a4ee"/><circle cx="20" cy="20" r="18" stroke="#fff" stroke-width="2.300" fill="none"/><path d="M3.200 16.700H12M3.200 23.200H12" stroke="#fff" stroke-width="2.500"/><path d="M11.400 12.600h2.600c1.300 2.200 2 4.700 2 7.400s-.7 5.200-2 7.400h-2.600z" fill="#fff"/><path d="M16.200 12.800h7.300c3 0 5.300 3.700 6.200 7.200-.9 3.500-3.200 7.200-6.200 7.200h-7.300c1.300-2.200 2-4.600 2-7.200s-.7-5-2-7.200z" fill="#fff"/><circle cx="22.200" cy="20" r="2.100" fill="#05a4ee"/><path d="M29 19.800h9" stroke="#fff" stroke-width="2.200"/></svg>
<span class="t sy" id="r4" style="left:248.73px;top:452.75px;font-size:14.5px;transform:scale(1.0384,1.08);transform-origin:0 50%">favicon</span>
<span class="t dim sy" id="d4" style="left:547.500px;top:452.75px">6/23/2025 6:02 PM</span>
<span class="t dim sy" id="y4" style="left:727px;top:452.75px">ICO File</span>
<span class="t dim sy" id="z4" style="right:16.500px;top:452.75px;font-size:14.5px;transform:scale(0.9066,1.08);transform-origin:100% 50%">5 KB</span>
<svg style="left:222.800px;top:476.7px" width="20.400" height="20.400" viewBox="0 0 20 20"><defs><linearGradient id="eg5" x1="0" y1="0" x2=".3" y2="1"><stop offset="0" stop-color="#2aa6ea"/><stop offset=".6" stop-color="#1579d3"/><stop offset="1" stop-color="#0c4f9e"/></linearGradient><linearGradient id="eh5" x1="0" y1=".6" x2="1" y2=".2"><stop offset="0" stop-color="#2b9fe8"/><stop offset=".45" stop-color="#30c3cf"/><stop offset="1" stop-color="#73e056"/></linearGradient></defs><path d="M.2 10C.2 15.600 4.600 19.800 10 19.800c3.500 0 6.500-1.800 8.200-4.600.2-.4-.2-.7-.6-.5-1.100.6-2.300.9-3.600.9-3.800 0-6.800-2.600-6.800-5.800 0-1.600.8-2.900 1.800-3.600C4.500 6 .2 7.500.2 10z" fill="url(#eg5)"/><path d="M4.300 13.200c.6 3.300 3.600 5.700 7.200 5.700 2.500 0 4.600-1 6.100-2.600-1.100.5-2.300.7-3.600.7-4.400 0-7.600-2.800-7.300-6.800-1.300.5-2.400 1.600-2.400 3z" fill="#0a4a95" opacity=".8"/><path d="M.2 10.500C.2 4.500 4.600.2 10.200.2c5.600 0 9.600 4 9.600 8.100 0 3-2.400 4.800-4.800 4.800-2.200 0-3.400-.8-3.400-1.700 0-.5.600-.9.600-2 0-1.800-1.800-3.500-4.400-3.500C4 5.900.2 8.600.2 10.500z" fill="url(#eh5)"/></svg>
<span class="t sy" id="r5" style="left:247.93px;top:489.75px;font-size:14.5px;transform:scale(1.0518,1.08);transform-origin:0 50%">placeholder</span>
<span class="t dim sy" id="d5" style="left:547.500px;top:489.75px">6/23/2025 5:48 PM</span>
<span class="t dim sy" id="y5" style="left:727px;top:489.75px">Microsoft Edge HTML Document</span>
<span class="t dim sy" id="z5" style="right:16.500px;top:489.75px;font-size:14.5px;transform:scale(0.9066,1.08);transform-origin:100% 50%">1 KB</span>
<!--LIST-END-->
<div class="abs" id="status"></div>
<!--STATUS-START-->
<span class="t sy" id="st0" style="left:18.500px;top:1006.15px">6 items</span>
<div class="vsep" style="left:77px;top:996px;height:10px;background:#d0d0d0"></div>
<span class="t sy" id="st1" style="left:91.65px;top:1006.15px;font-size:14.5px;transform:scale(0.9952,1.08);transform-origin:0 50%">1 item selected  1.16 KB</span>
<div class="vsep" style="left:260px;top:996px;height:10px;background:#d0d0d0"></div>
<!--STATUS-END-->
<!--DLG-START-->
<div class="abs" id="dlg">
 <div class="abs" id="dlgtitle"></div>
 <svg style="left:9px;top:10px" width="20" height="17" viewBox="0 0 20 17"><rect x=".5" y=".5" width="19" height="14.500" fill="#f6f6f6" stroke="#8f8f8f"/><rect x="1" y="1" width="18" height="2" fill="#c9c9c9"/><g fill="#8a9299"><circle cx="9.500" cy="6.800" r="2.600"/><circle cx="14" cy="10.600" r="1.900"/></g><g stroke="#8a9299" stroke-width="1.100"><path d="M9.500 3.400v6.800M6.100 6.800h6.800M7.100 4.400l4.800 4.800M11.900 4.400L7.100 9.200"/><path d="M14 8.100v5M11.500 10.600h5M12.300 8.900l3.400 3.400M15.700 8.900l-3.400 3.400" stroke-width=".9"/></g><g fill="#f6f6f6"><circle cx="9.500" cy="6.800" r="1"/><circle cx="14" cy="10.600" r=".8"/></g><rect x="0" y="9" width="8" height="8" fill="#fff"/><path d="M1.500 15.500l4.700-4.700M2.800 10.500h3.600v3.600" stroke="#1a73d9" stroke-width="1.300" fill="none" stroke-linecap="round" stroke-linejoin="round"/></svg>
 <span class="t sy2" id="dtitle" style="left:34.72px;top:19.7px;font-size:14.5px;transform:scale(1.0323,1.07);transform-origin:0 50%">launch-kiosk - Shortcut Properties</span>
 <svg style="left:510.500px;top:11.700px" width="13" height="13" viewBox="0 0 13 13"><path d="M.6.600l11.800 11.800M12.400.600L.6 12.400" stroke="#1a1a1a" stroke-width="1.200" fill="none"/></svg>
 <!-- tabs row 1 -->
 <div class="tab" style="left:11px;top:48px;width:90px;height:23.500px;letter-spacing:.2px;padding-right:1.500px"><span class="ax">Terminal</span></div>
 <div class="tab" style="left:100px;top:48px;height:23.500px;width:137px"><span class="ax">Digital Signatures</span></div>
 <div class="tab" style="left:236px;top:48px;height:23.500px;width:80.600px"><span class="ax">Security</span></div>
 <div class="tab" style="left:315.600px;top:48px;height:23.500px;width:72.600px"><span class="ax">Details</span></div>
 <div class="tab" style="left:387.200px;top:48px;height:23.500px;width:137.800px;letter-spacing:.12px"><span class="ax">Previous Versions</span></div>
 <!-- tabs row 2 -->
 <div class="tab" style="left:11px;top:71px;width:87.200px;line-height:24px"><span class="ax">General</span></div>
 <div class="tab" style="left:190.400px;top:71px;width:90px;padding-right:3.800px;line-height:24px"><span class="ax">Options</span></div>
 <div class="tab" style="left:279.400px;top:71px;width:76.800px;padding-right:2.800px;line-height:24px"><span class="ax">Font</span></div>
 <div class="tab" style="left:355.200px;top:71px;width:87px;line-height:24px"><span class="ax">Layout</span></div>
 <div class="tab" style="left:441.200px;top:71px;width:83.800px;padding-left:2.500px;line-height:24px"><span class="ax">Colors</span></div>
 <div class="abs" id="panel"></div>
 <div class="tab" id="tabact" style="left:97.400px;top:68.400px;width:93.600px;height:27px;background:#f9f9f9;line-height:25px"><span class="ax" style="top:-.400px">Shortcut</span></div>
 <!-- shortcut icon -->
 <svg style="left:28px;top:111px" width="40" height="40" viewBox="0 0 40 40"><rect width="40" height="40" rx="1.500" fill="#05a4ee"/><circle cx="20" cy="20" r="18" stroke="#fff" stroke-width="1.700" fill="none"/><path d="M3.200 16.700H12M3.200 23.200H12" stroke="#fff" stroke-width="2"/><path d="M11.400 12.600h2.600c1.300 2.200 2 4.700 2 7.400s-.7 5.200-2 7.400h-2.600z" fill="#fff"/><path d="M16.200 12.800h7.300c3 0 5.300 3.700 6.200 7.200-.9 3.500-3.200 7.200-6.200 7.200h-7.300c1.300-2.200 2-4.600 2-7.200s-.7-5-2-7.200z" fill="#fff"/><circle cx="22.200" cy="20" r="2.100" fill="#05a4ee"/><path d="M29 19.800h9" stroke="#fff" stroke-width="2.200"/></svg>
 <span class="t sy2" id="dname" style="left:111.76px;top:129.6px;font-size:12.85px;transform:scale(1.0222,1.15);transform-origin:0 50%">launch-kiosk - Shortcut</span>
 <div class="hsep" style="left:28px;top:159px;width:423px;background:#a0a0a0"></div>
 <span class="t lb sy2" id="l0" style="left:29.40px;top:183.4px;font-size:12.85px;transform:scale(1.0525,1.15);transform-origin:0 50%">Target type:</span>
 <span class="t lb sy2" id="v0" style="left:134.82px;top:183.4px;font-size:12.85px;transform:scale(1.0256,1.15);transform-origin:0 50%">Windows Batch File</span>
 <span class="t lb sy2" id="l1" style="left:29.40px;top:215.2px;font-size:12.85px;transform:scale(1.0507,1.15);transform-origin:0 50%">Target location:</span>
 <span class="t lb sy2" id="v1" style="left:134.52px;top:215.2px;font-size:12.85px;transform:scale(1.0221,1.15);transform-origin:0 50%">Open Kiosk</span>
 <span class="t lb sy2" id="l2" style="left:29.30px;top:247.2px;font-size:12.85px;transform:scale(1.0719,1.15);transform-origin:0 50%">Target:</span>
 <div class="inp" style="left:134px;top:235px;width:319.500px;height:27.500px"><span class="t" id="i2" style="left:2.44px;top:11.2px;font-size:13.33px;transform:scale(1.0193,1.05);transform-origin:0 50%">ers\mukes\Downloads\Open Kiosk\launch-kiosk.bat"</span></div>
 <div class="hsep" style="left:28px;top:273px;width:425px;background:#a0a0a0"></div>
 <span class="t lb sy2" id="l3" style="left:28.16px;top:300.8px;font-size:12.85px;transform:scale(0.9647,1.15);transform-origin:0 50%">Start in:</span>
 <div class="inp" style="left:134px;top:288.900px;width:319.500px;height:28.100px"><span class="t" id="i3" style="left:2.44px;top:10.8px;font-size:13.33px;transform:scale(1.0175,1.05);transform-origin:0 50%">"C:\Users\mukes\Downloads\Open Kiosk"</span></div>
 <span class="t lb sy2" id="l4" style="left:28.11px;top:338.8px;font-size:12.85px;transform:scale(1.0229,1.15);transform-origin:0 50%">Shortcut key:</span>
 <div class="inp" style="left:134px;top:327.400px;width:320px;height:27.500px;border:1px solid #7a7a7a;border-radius:2px"><span class="t" id="i4" style="left:1.80px;top:10.400px;font-size:13.33px;transform:scale(1.0257,1.05);transform-origin:0 50%">None</span></div>
 <span class="t lb sy2" id="l5" style="left:27.74px;top:376.7px;font-size:12.85px;transform:scale(1.012,1.15);transform-origin:0 50%">Run:</span>
 <div class="inp" style="left:134px;top:364.800px;width:320px;height:26.200px;border:1px solid #cfcfcf;border-radius:3px;background:#fbfbfb"><span class="t" id="i5" style="left:3.74px;top:13.7px;font-size:13.33px;transform:scale(0.9967,1.05);transform-origin:0 50%">Normal window</span><svg style="left:303px;top:9.200px" width="11" height="7" viewBox="0 0 11 7"><path d="M.8.800l4.700 4.700L10.200.800" stroke="#444" stroke-width="1.100" fill="none"/></svg></div>
 <span class="t lb sy2" id="l6" style="left:28.13px;top:413.5px;font-size:12.85px;transform:scale(1.0122,1.15);transform-origin:0 50%">Comment:</span>
 <div class="inp" style="left:134px;top:401.400px;width:319.500px;height:27.500px"></div>
 <div class="btn" id="b0" style="left:33px;top:438px;width:158px;height:26px;line-height:25.800px"><span class="ax">Open File Location</span></div>
 <div class="btn" id="b1" style="left:201px;top:438px;width:122px;height:26px;line-height:25.800px;border-color:#0067c0;letter-spacing:-.2px"><span class="ax">Change Icon...</span></div>
 <div class="btn" id="b2" style="left:333px;top:438px;width:120px;height:26px;line-height:25.800px"><span class="ax">Advanced...</span></div>
 <div class="btn" id="b3" style="left:215.400px;top:614.300px;width:97.300px;height:25.700px;line-height:24.800px"><span class="ax">OK</span></div>
 <div class="btn" id="b4" style="left:323.200px;top:614.300px;width:97.600px;height:25.700px;line-height:24.800px"><span class="ax">Cancel</span></div>
 <div class="btn" id="b5" style="left:430.900px;top:614.300px;width:98.100px;height:25.700px;line-height:24.800px;background:#e0eef9;border-color:#0070cc"><span class="ax">Apply</span></div>
</div>
<!--DLG-END-->
</body>
</html>
